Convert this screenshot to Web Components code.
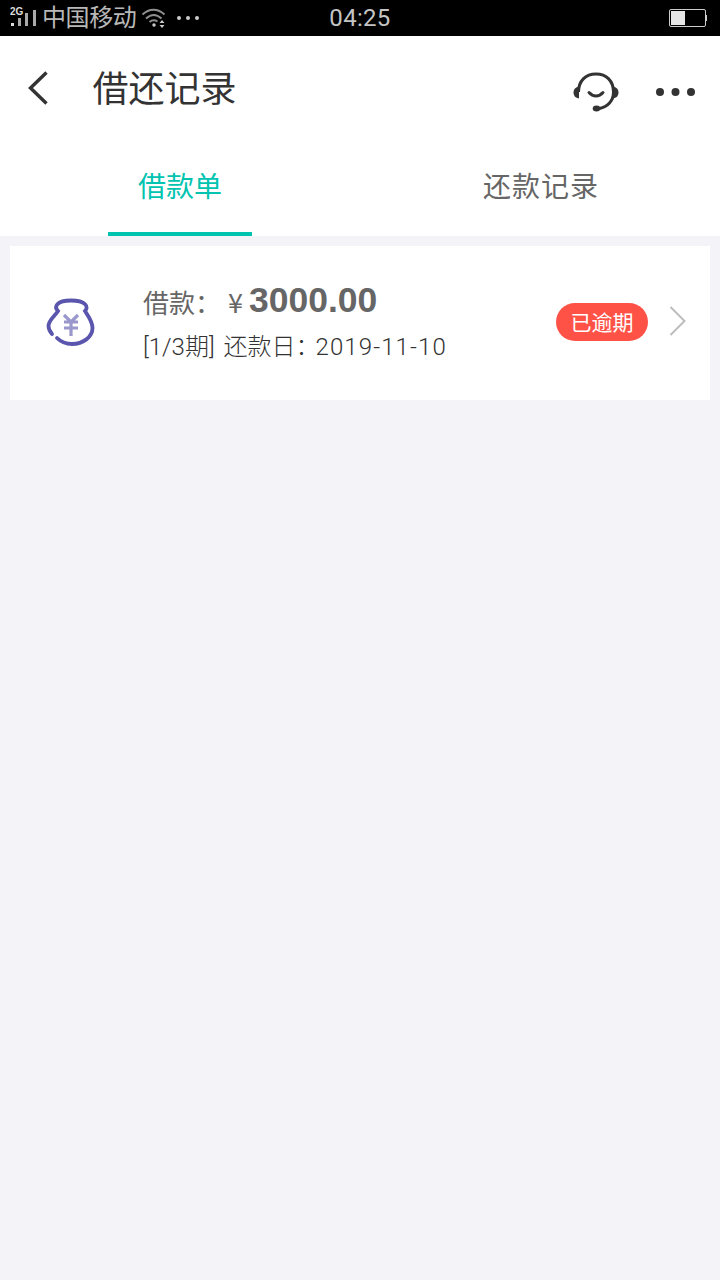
<!DOCTYPE html>
<html lang="zh">
<head>
<meta charset="utf-8">
<title>借还记录</title>
<style>
  html, body { margin: 0; padding: 0; background: #f3f3f8; }
  body { font-family: "Noto Sans CJK SC", "Liberation Sans", sans-serif; }
</style>
</head>
<body>
<status-bar></status-bar>
<nav-header title="借还记录"></nav-header>
<tab-bar></tab-bar>
<loan-card></loan-card>

<script>
class StatusBar extends HTMLElement {
  constructor() {
    super();
    this.attachShadow({mode: "open"});
    this.shadowRoot.innerHTML = `
    <style>
      :host {
        display: grid;
        grid-template-columns: 1fr auto 1fr;
        align-items: center;
        height: 36px;
        background: #000;
        color: #c4c4c4;
      }
      .left { display: flex; align-items: center; padding-left: 10px; }
      .carrier { font: 24px/32px "Noto Sans CJK SC", sans-serif; color: #b8b8b8; margin-left: 5px; width: 99px; letter-spacing: -0.4px; height: 36px; }
      .dots { margin-left: 9px; }
      .time { font: 24px/36px Roboto, sans-serif; letter-spacing: 0.3px; }
      .right { display: flex; justify-content: flex-end; padding-right: 13px; }
      svg { display: block; }
    </style>
    <div class="left">
      <svg width="27" height="22" viewBox="0 0 27 22">
        <text x="0" y="8" font-family="Liberation Sans" font-size="10" font-weight="700" fill="#ddd">2G</text>
        <rect x="1" y="16" width="3" height="3" fill="#ddd"/>
        <rect x="8" y="11" width="3" height="8" fill="#aaa"/>
        <rect x="15" y="6" width="3" height="13" fill="#aaa"/>
        <rect x="23" y="3" width="3" height="16" fill="#aaa"/>
      </svg>
      <span class="carrier">中国移动</span>
      <svg class="wifi" width="26" height="22" viewBox="0 0 26 22" fill="none" stroke="#8f8f8f" stroke-width="2">
        <path d="M1.500 7.500C8 1 17 1 23.500 7.500"/>
        <path d="M5 11.500C10 7 15.500 7 20.500 11.500"/>
        <path d="M8.500 15C11 13 14 13 16.500 14.500"/>
        <circle cx="13" cy="18" r="1.700" fill="#ccc" stroke="none"/>
        <path d="M18.500 16h5l-2.500-3zM18.500 18h5l-2.500 3z" fill="#ccc" stroke="none"/>
      </svg>
      <svg class="dots" width="24" height="6" viewBox="0 0 24 6" fill="#ccc">
        <circle cx="3" cy="3" r="2"/><circle cx="12" cy="3" r="2"/><circle cx="21" cy="3" r="2"/>
      </svg>
    </div>
    <div class="time">04:25</div>
    <div class="right">
      <svg width="38" height="18" viewBox="0 0 38 18">
        <rect x="0.5" y="0.5" width="36" height="17" rx="1.500" fill="none" stroke="#ccc" stroke-width="1"/>
        <rect x="2" y="2" width="14" height="14" fill="#e6e6e6"/>
        <rect x="37" y="6" width="1" height="6" fill="#ccc"/>
      </svg>
    </div>
    `;
  }
}

class NavHeader extends HTMLElement {
  constructor() {
    super();
    this.attachShadow({mode: "open"});
    this.shadowRoot.innerHTML = `
    <style>
      :host {
        display: flex;
        align-items: center;
        height: 104px;
        background: #fff;
        color: #333;
        padding-left: 28px;
        padding-right: 25px;
      }
      svg { display: block; }
      .back { margin-right: 44.500px; }
      .title { font: 36px/100px "Noto Sans CJK SC", sans-serif; flex: 1; height: 104px; }
      .help { margin-right: 36px; margin-top: 7px; }
      .more { margin-top: 8px; }
    </style>
    <svg class="back" width="20" height="34" viewBox="0 0 20 34" fill="none" stroke="#333" stroke-width="3.400">
      <path d="M18.500 1.500L2.500 17l16 15.500"/>
    </svg>
    <span class="title"></span>
    <svg class="help" width="46" height="40" viewBox="0 0 46 40" fill="none" stroke="#333" stroke-width="3">
      <path d="M5.500 20C5.500 9 12.500 2 23 2s17.500 7 17.500 18c0 9-6 15-14 16.500"/>
      <path d="M16 20.500c4 4.500 10 4.500 14 0" stroke-linecap="round"/>
      <path d="M6 14.500v12c-3.500-.5-5.500-2.500-5.500-6s2-5.500 5.500-6z" fill="#333" stroke="none"/>
      <path d="M40 14.500v12c3.500-.5 5.500-2.500 5.500-6s-2-5.500-5.500-6z" fill="#333" stroke="none"/>
      <ellipse cx="23.500" cy="36.500" rx="3.800" ry="3" fill="#333" stroke="none"/>
    </svg>
    <svg class="more" width="40" height="10" viewBox="0 0 40 10" fill="#333">
      <circle cx="5" cy="5" r="4"/><circle cx="20.500" cy="5" r="4"/><circle cx="36" cy="5" r="4"/>
    </svg>
    `;
    this.shadowRoot.querySelector(".title").textContent = this.getAttribute("title");
  }
}

class TabBar extends HTMLElement {
  constructor() {
    super();
    this.attachShadow({mode: "open"});
    this.shadowRoot.innerHTML = `
    <style>
      :host {
        display: grid;
        grid-template-columns: 1fr 1fr;
        height: 96px;
        background: #fff;
        font: 28px/1 "Noto Sans CJK SC", sans-serif;
      }
      .tab {
        display: flex;
        flex-direction: column;
        align-items: center;
        justify-content: space-between;
        color: #666;
      }
      .tab span { padding-top: 24px; line-height: 42px; }
      .tab:last-child span { letter-spacing: 1px; padding-left: 2px; }
      .active { color: #00c4b0; }
      .active i { display: block; width: 144px; height: 4px; background: #00c4b0; }
    </style>
    <div class="tab active"><span>借款单</span><i></i></div>
    <div class="tab"><span>还款记录</span></div>
    `;
  }
}

class LoanCard extends HTMLElement {
  constructor() {
    super();
    this.attachShadow({mode: "open"});
    this.shadowRoot.innerHTML = `
    <style>
      :host {
        display: flex;
        align-items: center;
        box-sizing: border-box;
        height: 154px;
        margin: 10px 10px 0;
        background: #fff;
        padding-left: 36px;
        padding-right: 24px;
      }
      svg { display: block; flex: none; }
      .bag { margin-bottom: 2px; }
      .body { flex: 1; margin-left: 47px; padding-bottom: 2px; }
      .line1 { color: #666; font: 26px/38px "Noto Sans CJK SC", sans-serif; height: 38px; white-space: nowrap; }
      .yen { margin-left: 7px; font-size: 27px; }
      .amount { font: 700 35.500px/38px "Liberation Sans", sans-serif; margin-left: 6px; vertical-align: 1px; }
      .line2 { color: #333; font: 300 24px/34px Roboto, "Noto Sans CJK SC", sans-serif; margin-top: 11px; word-spacing: 3px; }
      .date { letter-spacing: 1.100px; margin-left: -4px; }
      .badge {
        background: #ff5247;
        color: #fff;
        font: 21px/36px "Noto Sans CJK SC", sans-serif;
        height: 38px;
        width: 92px;
        text-align: center;
        border-radius: 19px;
        margin-right: 21px;
        margin-bottom: 2px;
      }
      .chev { margin-bottom: 4px; }
    </style>
    <svg class="bag" width="50" height="50" viewBox="0 0 50 50" fill="none">
      <path d="M6 37C3.500 34 2.500 32 2.500 29 2.500 23 9 19 12 14 8 10 10 3.500 25 3.500S43 10 39 14C42 19 46.500 24 46.500 31 46.500 40 37 47 26 47 20 47 15 45 11 41" stroke="#5a55ad" stroke-width="3.800" stroke-linecap="round"/>
      <path d="M18 18l7 7 7-7M18 25h14M18 31h14M25 25v14" stroke="#9a97cd" stroke-width="3.200"/>
    </svg>
    <div class="body">
      <div class="line1"><span>借款：</span><span class="yen">¥</span><span class="amount">3000.00</span></div>
      <div class="line2">[1/3期] 还款日：<span class="date">2019-11-10</span></div>
    </div>
    <span class="badge">已逾期</span>
    <svg class="chev" width="17" height="30" viewBox="0 0 17 30" fill="none" stroke="#bdbdbd" stroke-width="2">
      <path d="M1.500 1l14 14-14 14"/>
    </svg>
    `;
  }
}

customElements.define("status-bar", StatusBar);
customElements.define("nav-header", NavHeader);
customElements.define("tab-bar", TabBar);
customElements.define("loan-card", LoanCard);
</script>
</body>
</html>
